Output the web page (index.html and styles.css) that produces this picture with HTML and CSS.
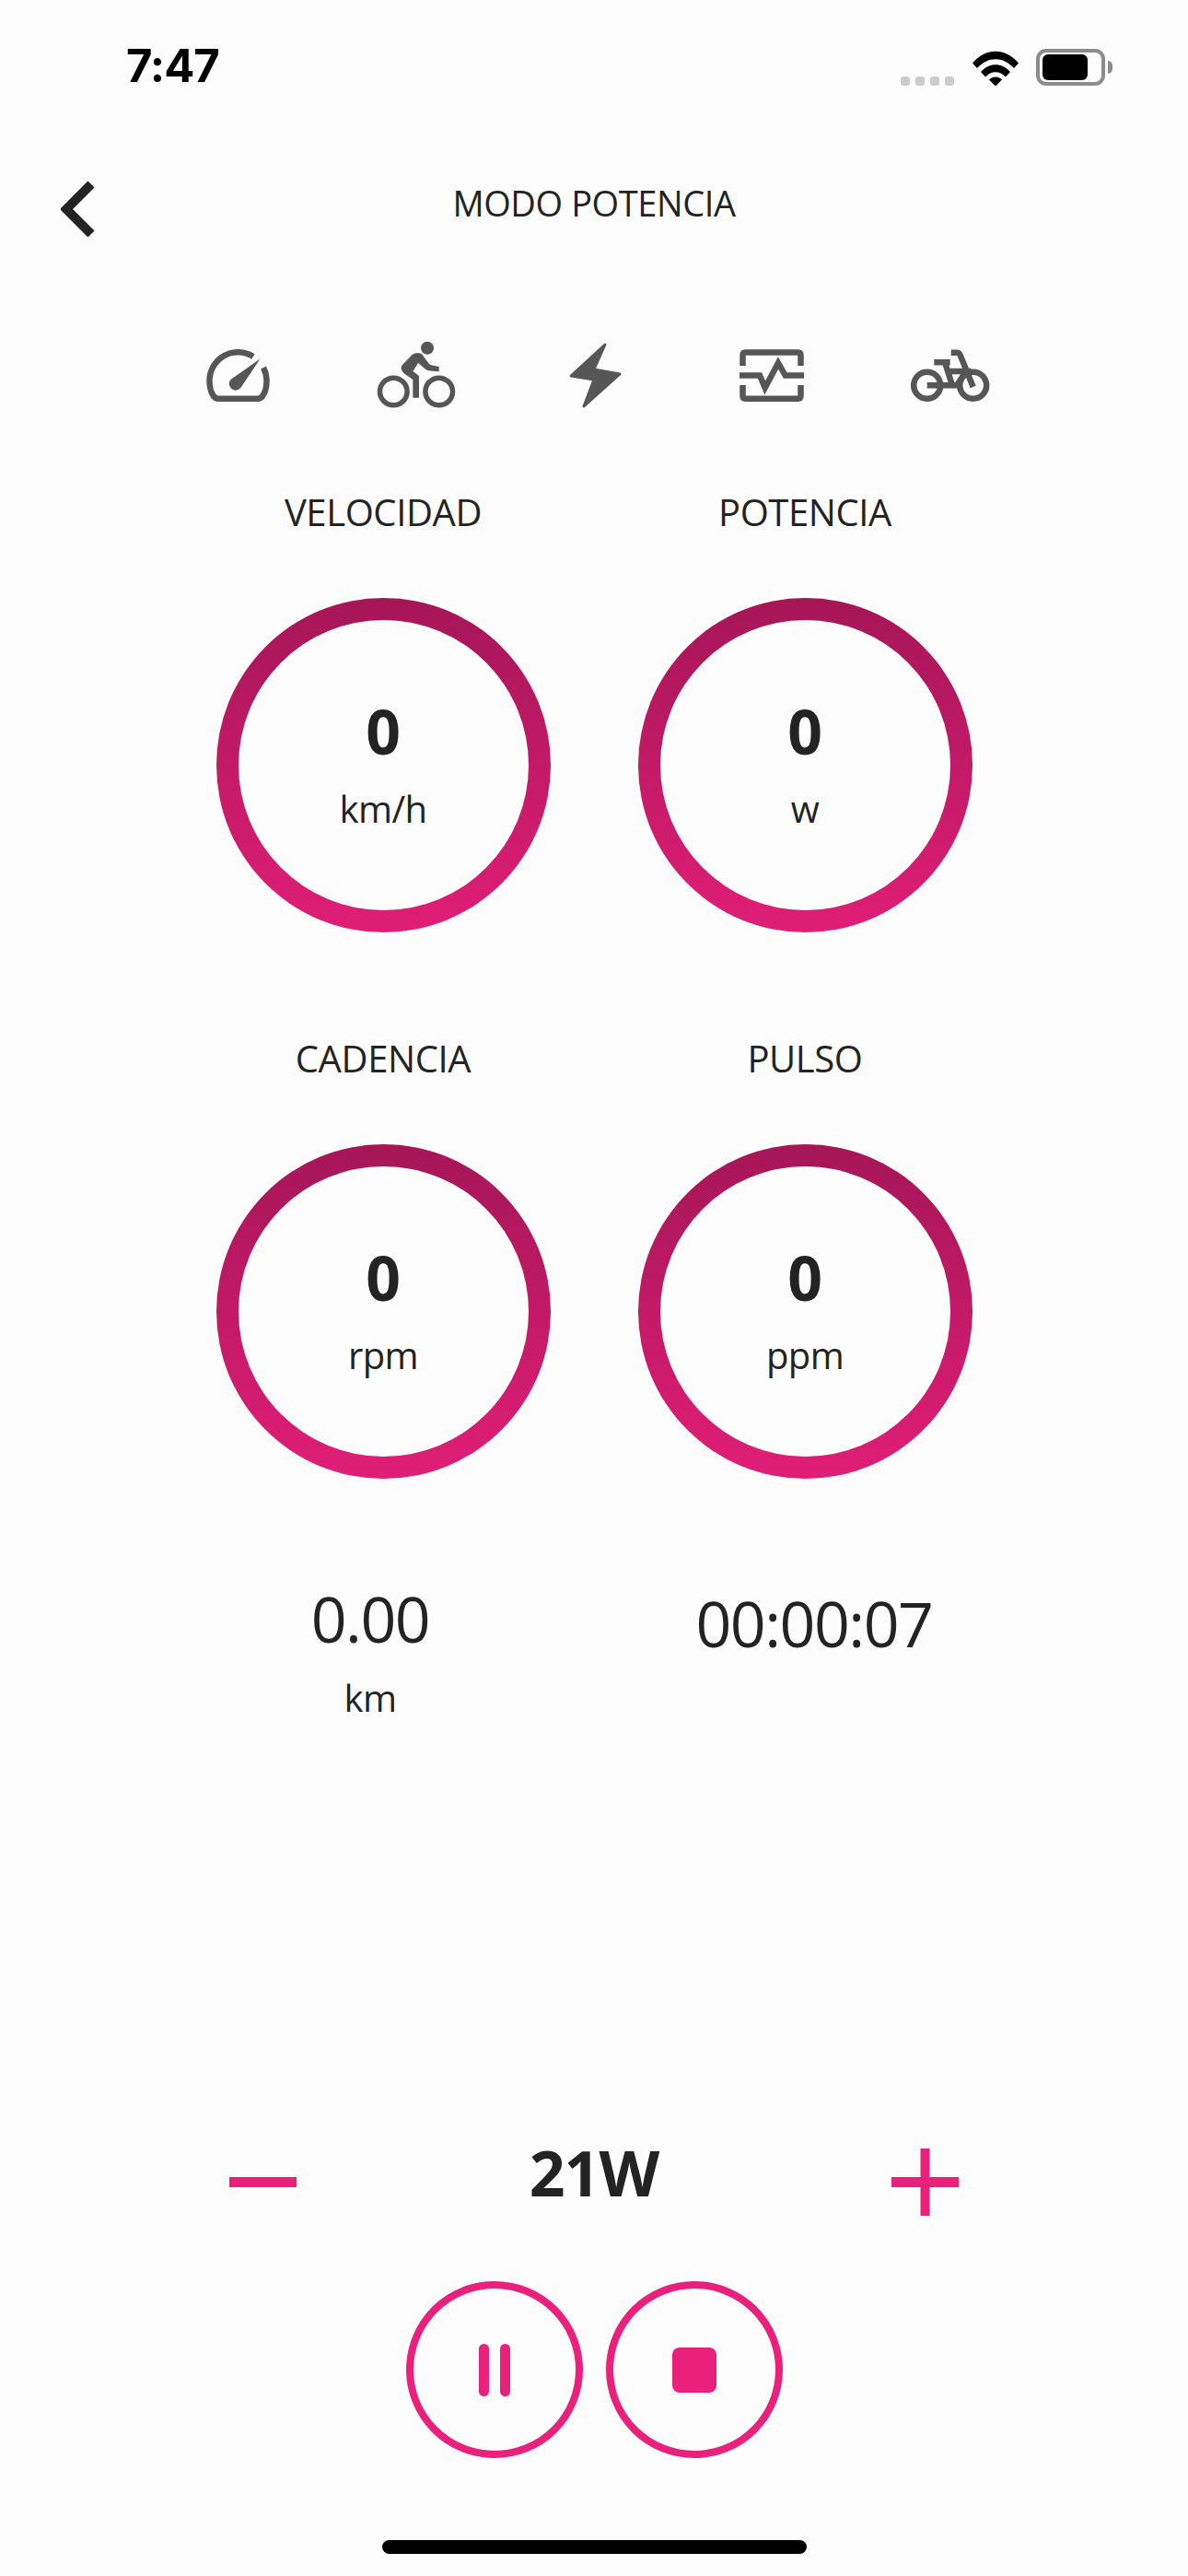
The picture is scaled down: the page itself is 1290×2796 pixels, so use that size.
FILE: index.html
```html
<!DOCTYPE html>
<html lang="es">
<head>
    <meta charset="UTF-8">
    <meta name="viewport" content="width=device-width, initial-scale=1.0">
    <title>Modo Potencia</title>
    <link rel="stylesheet" href="styles.css">
</head>
<body>

    <!-- Status Bar -->
    <div class="status-bar">
        <span class="clock">7:47</span>
        <div class="status-icons">
            <div class="signal"><i></i><i></i><i></i><i></i></div>
            <svg class="wifi" viewBox="0 0 50 38" width="50" height="38">
                <path d="M0 13.5C14 -3.5 36 -3.5 50 13.5L45 19C33 6 17 6 5 19Z"/>
                <path d="M9 23C18 12.5 32 12.5 41 23L36 28.5C29.5 21.5 20.5 21.5 14 28.5Z"/>
                <path d="M18 31.5C22 27.5 28 27.5 32 31.5L25 38.5Z"/>
            </svg>
            <div class="battery"><div class="battery-level"></div></div>
        </div>
    </div>

    <!-- Header -->
    <header class="header">
        <a class="back-btn" href="#">
            <svg viewBox="0 0 37 60" width="37" height="60">
                <path d="M33 3L6 30L33 57" fill="none" stroke="#232323" stroke-width="10"/>
            </svg>
        </a>
        <h1>MODO POTENCIA</h1>
    </header>

    <!-- Mode Tabs -->
    <nav class="mode-tabs">
        <svg viewBox="0 0 100 80" width="100" height="80">
            <path class="line" d="M66 19A31 31 0 0 0 18.500 45.500C18.500 52 20 58 23 62Q25 64.700 28 64.700H71Q74 64.700 76 62C79 58 80.500 52 80.500 45.500A31 31 0 0 0 77 31"/>
            <path class="solid" d="M73.500 21.500L53 52A7 7 0 1 1 43.500 42.500Z"/>
        </svg>
        <svg viewBox="0 0 100 80" width="100" height="80">
            <circle class="solid" cx="62" cy="9.700" r="7"/>
            <circle class="line thin" cx="25.300" cy="57" r="14.800"/>
            <circle class="line thin" cx="74.700" cy="57" r="14.800"/>
            <path class="solid" d="M34.500 28.500L45.500 17Q47.500 15.300 50 15.300H53Q55.500 15.300 57 17.500L63.500 26.500Q64.500 28 67 28.500L74.700 30V35.300L65 34.500Q60 33.700 58 31L52 26L46.500 35L53 40V63.700H46.300V44L37 37.500Q32 33 34.500 28.500Z"/>
        </svg>
        <svg viewBox="0 0 100 80" width="100" height="80">
            <path class="solid bolt" d="M62 6L25 40L50 44L39 73L78 38L50 33Z"/>
        </svg>
        <svg viewBox="0 0 100 80" width="100" height="80">
            <path class="line" d="M18.500 29V17.500Q18.500 14.500 21.500 14.500H78.500Q81.500 14.500 81.500 17.500V29"/>
            <path class="line" d="M18.500 50V61.700Q18.500 64.700 21.500 64.700H78.500Q81.500 64.700 81.500 61.700V50"/>
            <path class="line" d="M15 39.500H37L42.700 53L57 26L64.700 39.500H85"/>
        </svg>
        <svg viewBox="0 0 100 80" width="100" height="80">
            <circle class="line" cx="25.700" cy="50.300" r="14.500"/>
            <circle class="line" cx="75.700" cy="50.300" r="14.500"/>
            <path class="line" d="M51.700 14.700H58Q60.700 14.700 61.700 17.500L75.700 52"/>
            <path class="line" d="M33.300 25.300H50.700M45 25.300L53 50M25.700 50.300H58L68 35H48"/>
        </svg>
    </nav>

    <!-- Live Metrics -->
    <section class="metrics">
        <div class="metric">
            <span class="metric-label">VELOCIDAD</span>
            <div class="ring"><div class="ring-inner"><strong>0</strong><span>km/h</span></div></div>
        </div>
        <div class="metric">
            <span class="metric-label">POTENCIA</span>
            <div class="ring"><div class="ring-inner"><strong>0</strong><span>w</span></div></div>
        </div>
        <div class="metric">
            <span class="metric-label">CADENCIA</span>
            <div class="ring"><div class="ring-inner"><strong>0</strong><span>rpm</span></div></div>
        </div>
        <div class="metric">
            <span class="metric-label">PULSO</span>
            <div class="ring"><div class="ring-inner"><strong>0</strong><span>ppm</span></div></div>
        </div>
    </section>

    <!-- Distance and Time -->
    <section class="totals">
        <div class="total">
            <span class="total-value">0.00</span>
            <span class="total-unit">km</span>
        </div>
        <div class="total total-time">
            <span class="total-value">00:00:07</span>
        </div>
    </section>

    <!-- Power Target -->
    <section class="power">
        <button class="power-btn">
            <svg viewBox="0 0 73 73" width="73" height="73"><rect y="31" width="73" height="11"/></svg>
        </button>
        <span class="power-value">21W</span>
        <button class="power-btn">
            <svg viewBox="0 0 73 73" width="73" height="73"><rect y="31" width="73" height="11"/><rect x="31.500" width="10" height="73"/></svg>
        </button>
    </section>

    <!-- Pause / Stop -->
    <section class="controls">
        <button class="round-btn"><i class="pause-bar"></i><i class="pause-bar"></i></button>
        <button class="round-btn"><i class="stop-square"></i></button>
    </section>

    <div class="home-indicator"></div>

</body>
</html>
```

FILE: styles.css
```css
/* Full Page Styling */
* {
    box-sizing: border-box;
}

body {
    margin: 0;
    width: 1290px;
    height: 2796px;
    overflow: hidden;
    background-color: #fdfdfd;
    color: #232323;
    font-family: "Open Sans", "Liberation Sans", sans-serif;
}

/* Status Bar */
.status-bar {
    display: flex;
    justify-content: space-between;
    align-items: center;
    height: 142px;
    padding: 0 90px 0 137px;
}

.clock {
    font-family: "Inter", "Liberation Sans", sans-serif;
    font-size: 49px;
    font-weight: 700;
    letter-spacing: -1px;
    color: #000;
}

.status-icons {
    display: flex;
    align-items: flex-end;
    height: 40px;
    margin-top: 3px;
}

.signal {
    display: flex;
    gap: 6px;
    margin-right: 20px;
}

.signal i {
    width: 10px;
    height: 10px;
    border-radius: 3px;
    background-color: #cbcbcb;
}

.wifi {
    margin-right: 19px;
}

.battery {
    position: relative;
    width: 75px;
    height: 40px;
    padding: 2px 3px;
    border: 4px solid #8c8c8c;
    border-radius: 11px;
}

/* battery tip */
.battery::after {
    content: "";
    position: absolute;
    top: 9px;
    right: -12px;
    width: 5px;
    height: 14px;
    border-radius: 0 5px 5px 0;
    background-color: #8c8c8c;
}

.battery-level {
    width: 49px;
    height: 100%;
    border-radius: 6px;
    background-color: #000;
}

/* Header */
.header {
    display: flex;
    position: relative;
    justify-content: center;
    align-items: center;
    height: 158px;
    padding-bottom: 3px;
}

.header h1 {
    margin: 0;
    font-size: 38px;
    font-weight: 400;
    letter-spacing: -0.4px;
}

.back-btn {
    position: absolute;
    left: 66px;
    top: 55px;
}

.back-btn svg {
    display: block;
}

/* Mode Tabs */
.mode-tabs {
    display: flex;
    justify-content: center;
    gap: 93px;
    margin-top: 68px;
}

.line {
    fill: none;
    stroke: #565656;
    stroke-width: 6.500;
}

.thin {
    stroke-width: 5.500;
}

.solid {
    fill: #565656;
}

.bolt {
    stroke: #565656;
    stroke-width: 3;
    stroke-linejoin: round;
}

/* Live Metrics */
.metrics {
    display: grid;
    grid-template-columns: 458px 458px;
    justify-content: center;
    row-gap: 112px;
    margin-top: 83px;
}

.metric {
    display: flex;
    flex-direction: column;
    align-items: center;
}

.metric-label {
    font-size: 40px;
    line-height: 50px;
    letter-spacing: -0.4px;
    margin-bottom: 68px;
}

.ring {
    width: 363px;
    height: 363px;
    padding: 24px;
    border-radius: 50%;
    background: linear-gradient(180deg, #a51657 0%, #e01e77 100%);
}

.ring-inner {
    display: flex;
    flex-direction: column;
    align-items: center;
    height: 100%;
    padding-top: 83px;
    border-radius: 50%;
    background-color: #fdfdfd;
}

.ring-inner strong {
    font-size: 66px;
    line-height: 74px;
    font-weight: 700;
}

.ring-inner span {
    margin-top: 23px;
    font-size: 40px;
    line-height: 50px;
    letter-spacing: -0.6px;
}

/* Distance and Time */
.totals {
    display: flex;
    margin-top: 107px;
    padding-left: 172px;
}

.total {
    display: flex;
    flex-direction: column;
    align-items: center;
    width: 460px;
}

.total-time {
    margin-left: 22px;
    padding-top: 5px;
}

.total-value {
    font-size: 68px;
    line-height: 90px;
    letter-spacing: -1.500px;
}

.total-unit {
    margin-top: 16px;
    font-size: 40px;
    line-height: 50px;
    letter-spacing: -0.6px;
}

/* Power Target */
.power {
    display: flex;
    position: absolute;
    top: 2310px;
    left: 0;
    right: 0;
    justify-content: space-between;
    align-items: center;
    padding: 0 249px;
}

button {
    padding: 0;
    border: none;
    background: none;
    cursor: pointer;
}

.power-btn {
    height: 73px;
    margin-top: 22px;
}

.power-btn svg {
    display: block;
    fill: #e9207c;
}

.power-value {
    font-size: 68px;
    line-height: 80px;
    font-weight: 700;
    letter-spacing: -1px;
}

/* Pause / Stop */
.controls {
    display: flex;
    position: absolute;
    top: 2476px;
    left: 0;
    right: 0;
    justify-content: center;
    gap: 25px;
}

.round-btn {
    display: flex;
    justify-content: center;
    align-items: center;
    gap: 12px;
    width: 192px;
    height: 192px;
    border: 8px solid #e9207c;
    border-radius: 50%;
}

.pause-bar {
    width: 11px;
    height: 57px;
    border-radius: 6px;
    background-color: #e9207c;
}

.stop-square {
    width: 48px;
    height: 49px;
    border-radius: 8px;
    background-color: #e9207c;
}

/* Home Indicator */
.home-indicator {
    position: absolute;
    top: 2757px;
    left: 415px;
    width: 461px;
    height: 15px;
    border-radius: 8px;
    background-color: #000;
}
```
